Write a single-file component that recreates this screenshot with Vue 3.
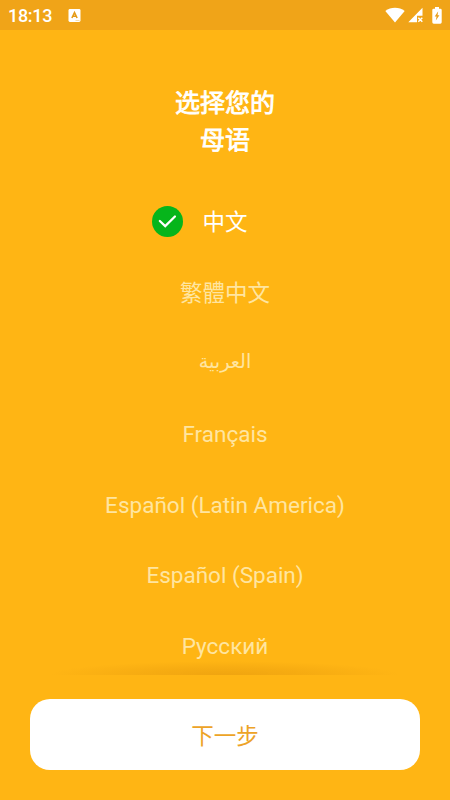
<script setup>
import { ref } from 'vue'

const languages = [
  { id: 'zh-CN', name: '中文' },
  { id: 'zh-TW', name: '繁體中文' },
  { id: 'ar', name: 'العربية' },
  { id: 'fr', name: 'Français' },
  { id: 'es-LA', name: 'Español (Latin America)' },
  { id: 'es-ES', name: 'Español (Spain)' },
  { id: 'ru', name: 'Русский' },
]
const selected = ref('zh-CN')
</script>

<template>
  <main class="screen">
    <header class="status">
      <span class="clock">18:13</span>
      <svg class="app-icon" viewBox="0 0 13 13">
        <rect x="0.5" y="0" width="12" height="13" rx="1.4" fill="#fff" />
        <path d="M3.9 9 6.5 3.600 9.1 9M4.9 7.3h3.200" fill="none" stroke="#e59b17" stroke-width="1.6" />
        <path d="M7.500 11.500h4" stroke="#eda41b" stroke-width=".6" opacity=".6" />
      </svg>
      <div class="indicators">
        <svg class="wifi" viewBox="0 0 20 16">
          <path d="M.3 4C5.800-.3 14.200-.3 19.700 4L10 15.500Z" fill="#fff" />
        </svg>
        <svg class="signal" viewBox="0 0 16 16">
          <path d="M14.500 .8V8.800H9V15.200H.300Z" fill="#fff" />
          <path d="m10.300 10.700 4 4m0-4-4 4" stroke="#fff" stroke-width="1.500" />
        </svg>
        <svg class="battery" viewBox="0 0 10 17">
          <path d="M3 0h4v1.700h1.300Q9.700 1.700 9.700 3.100V15.300Q9.700 16.700 8.300 16.700H1.700Q.3 16.700.3 15.300V3.100Q.3 1.700 1.700 1.700H3Z" fill="#fff" />
          <path d="M6.200 4.300 2.700 9.500h1.900L3.800 13.500 7.400 8.200H5.500Z" fill="#e89d18" />
        </svg>
      </div>
    </header>

    <h1 class="title">选择您的<br />母语</h1>

    <ul class="languages">
      <li
        v-for="language in languages"
        :key="language.id"
        class="language"
        :class="[language.id.slice(0, 2), { selected: selected === language.id }]"
        @click="selected = language.id"
      >
        <span class="label">
          <svg v-if="selected === language.id" class="check" viewBox="0 0 30 30">
            <circle cx="15" cy="15" r="15" fill="#06b51b" />
            <path d="m7.600 14.500 5.200 5L22.200 10.100" fill="none" stroke="#fff" stroke-width="2.200" stroke-linecap="round" />
          </svg>
          {{ language.name }}
        </span>
      </li>
    </ul>

    <div class="list-shadow"></div>
    <button class="next">下一步</button>
  </main>
</template>

<style>
body {
  margin: 0;
}
</style>

<style scoped>
.screen {
  box-sizing: border-box;
  width: 100%;
  height: 100vh;
  display: flex;
  flex-direction: column;
  overflow: hidden;
  background: #ffb514;
  color: #fff;
  font-family: Roboto, "Noto Sans CJK SC", "Noto Sans", "DejaVu Sans", sans-serif;
}
.status {
  box-sizing: border-box;
  flex: none;
  height: 30px;
  padding: 0 8px 0 8px;
  display: flex;
  align-items: center;
  background: #f0a418;
}
.clock {
  width: 60px;
  font-size: 18px;
  font-weight: 500;
  line-height: 28px;
  letter-spacing: -0.3px;
  padding-top: 2px;
}
.app-icon {
  width: 13px;
  height: 13px;
}
.indicators {
  display: flex;
  align-items: center;
  margin-left: auto;
}
.wifi {
  width: 20px;
  height: 16px;
}
.signal {
  width: 16px;
  height: 16px;
  margin-left: 3px;
}
.battery {
  width: 10px;
  height: 17px;
  margin-left: 8px;
}
.title {
  flex: none;
  margin: 55px 0 27px;
  text-align: center;
  font-size: 25px;
  font-weight: 400;
  line-height: 37px;
  -webkit-text-stroke: 0.8px #fff;
}
.languages {
  flex: none;
  height: 489px;
  margin: 0;
  padding: 0;
  list-style: none;
  overflow: hidden;
}
.language {
  box-sizing: border-box;
  height: 70.8px;
  display: flex;
  align-items: center;
  justify-content: center;
  color: #ffe5a0;
  font-size: 22.5px;
  line-height: 34px;
}
.zh {
  padding-top: 2px;
}
.ar {
  padding-bottom: 1px;
  font-size: 19.3px;
}
.selected {
  color: #fff;
}
.label {
  position: relative;
}
.check {
  position: absolute;
  left: -50px;
  top: 1px;
  width: 31px;
  height: 31px;
}
.list-shadow {
  flex: none;
  height: 14px;
  margin: -14px 50px 24px;
  background: radial-gradient(ellipse 50% 100% at 50% 100%, rgba(190, 110, 0, 0.23), rgba(190, 110, 0, 0.13) 50%, transparent);
}
.next {
  flex: none;
  height: 71px;
  margin: 0 30px;
  padding: 2px 0 0;
  border: 0;
  border-radius: 20px;
  background: #fff;
  color: #eda327;
  font: 400 22.5px/34px Roboto, "Noto Sans CJK SC", sans-serif;
}
</style>
